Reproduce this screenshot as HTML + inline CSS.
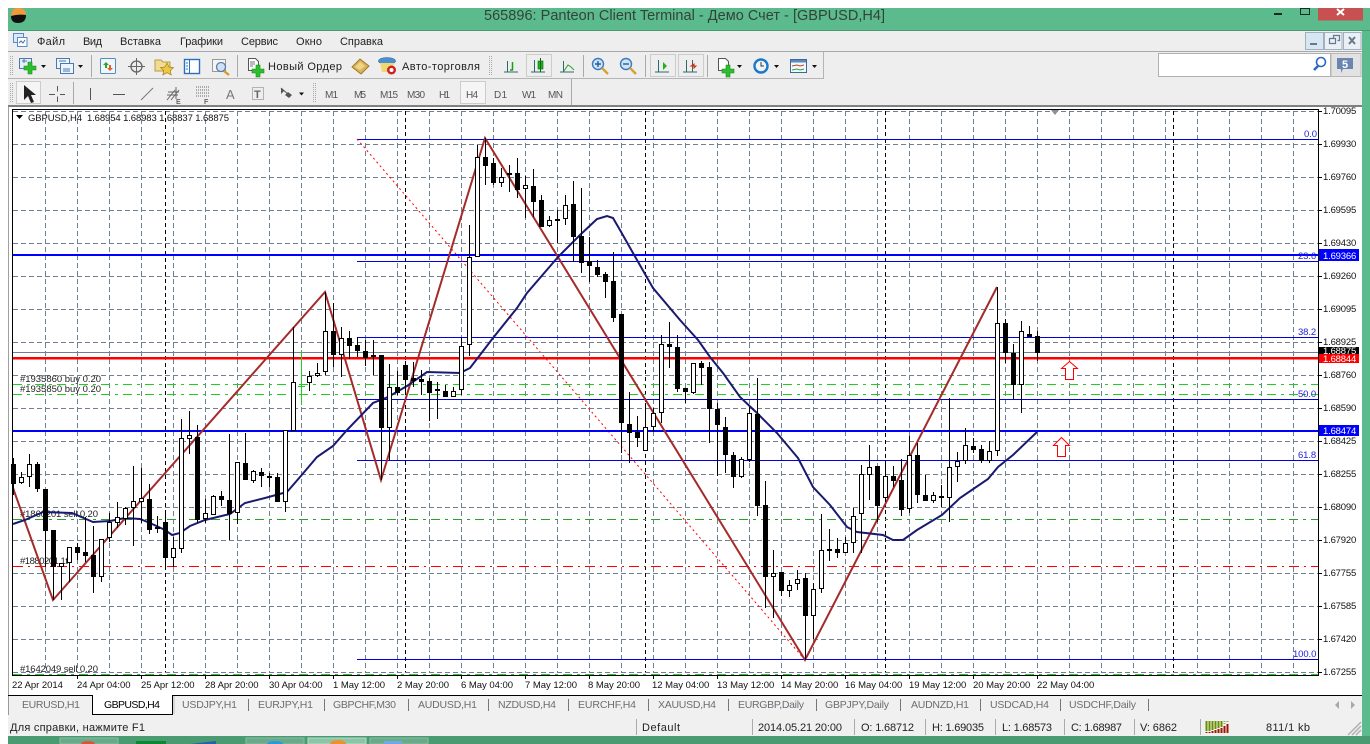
<!DOCTYPE html>
<html lang="ru"><head><meta charset="utf-8"><title>565896: Panteon Client Terminal</title>
<style>
html,body{margin:0;padding:0;background:#fff;width:1370px;height:744px;overflow:hidden}
svg{display:block}
text{font-family:"Liberation Sans",sans-serif;font-size:9.5px;fill:#000;white-space:pre}
.m{font-size:11px;fill:#222}
.tab{font-size:10.5px;fill:#6a6e72}
.st{font-size:11px;fill:#222}
.tf{font-size:10px;fill:#555}
.p{letter-spacing:-.18px;fill:#111}
.t{letter-spacing:-.03px;fill:#111}
.w{letter-spacing:-.18px;fill:#fff}
.f{fill:#2222dd;letter-spacing:-.1px}
.o{fill:#222}
</style></head><body>
<svg width="1370" height="744" viewBox="0 0 1370 744" xmlns="http://www.w3.org/2000/svg">
<!-- frame -->
<rect x="8" y="8" width="1362" height="736" fill="#5cbb8c"/>
<rect x="8" y="30" width="1362" height="1" fill="#4a9a72"/>
<rect x="8" y="31" width="1354" height="705" fill="#eeeeee"/>
<rect x="8" y="736" width="1362" height="8" fill="#4a9a72"/>
<!-- taskbar pieces -->
<rect x="60" y="738" width="58" height="6" fill="#6aa98a" stroke="#88c0a4"/>
<ellipse cx="88" cy="744" rx="7" ry="3" fill="#d8573c"/>
<rect x="136" y="741" width="30" height="3" fill="#0a8a30"/>
<path d="M190 744L216 741V744z" fill="#2a5ea8"/>
<rect x="246" y="738" width="58" height="6" fill="#6aa98a" stroke="#88c0a4"/>
<ellipse cx="275" cy="744" rx="8" ry="3" fill="#2a9ae0"/>
<rect x="308" y="738" width="58" height="6" fill="#8cc4a8" stroke="#b8dcc8"/>
<ellipse cx="338" cy="744" rx="8" ry="4" fill="#ee9030"/>
<rect x="370" y="738" width="58" height="6" fill="#6aa98a" stroke="#88c0a4"/>
<rect x="384" y="741" width="18" height="3" fill="#70a8e0"/>
<!-- logo -->
<path d="M11 16Q11 8 18 8Q26 8 26 15Q18 14 11 16z" fill="#f09a3c"/>
<path d="M11 16Q18 14 26 15Q26 23 18 23Q11 23 11 16z" fill="#111"/>
<!-- title -->
<text x="484" y="20" style="font-size:14.5px;fill:#34423c" textLength="401" lengthAdjust="spacing">565896: Panteon Client Terminal - Демо Счет - [GBPUSD,H4]</text>
<rect x="1274" y="13" width="8" height="2" fill="#1a2a22"/>
<rect x="1300.5" y="8.5" width="9" height="6" fill="none" stroke="#1a2a22"/>
<rect x="1318" y="8" width="45" height="12.5" fill="#c75050"/>
<path d="M1337 9L1344 15M1344 9L1337 15" stroke="#fff" stroke-width="2"/>
<!-- menu bar -->
<rect x="8" y="51" width="1354" height="1" fill="#a8a8a8"/>
<rect x="13.5" y="33.5" width="10" height="9" fill="#dbe8f8" stroke="#5a8ac8"/>
<rect x="17.5" y="37.5" width="9.5" height="9" fill="#fff" stroke="#5a8ac8"/>
<path d="M19 43l2-2 2 2 2-3" stroke="#3a70b0" fill="none"/>
<text class="m" x="37" y="45" textLength="28">Файл</text>
<text class="m" x="83" y="45" textLength="19">Вид</text>
<text class="m" x="120" y="45" textLength="41">Вставка</text>
<text class="m" x="180" y="45" textLength="43">Графики</text>
<text class="m" x="241" y="45" textLength="37">Сервис</text>
<text class="m" x="296" y="45" textLength="26">Окно</text>
<text class="m" x="340" y="45" textLength="43">Справка</text>
<rect x="1305.5" y="32.5" width="18" height="17" fill="#d8e6f4" stroke="#a0b0c0"/>
<rect x="1324.5" y="32.5" width="17.5" height="17" fill="#eaf0f6" stroke="#a0b0c0"/>
<rect x="1343.5" y="32.5" width="17.5" height="17" fill="#eaf0f6" stroke="#a0b0c0"/>
<rect x="1310" y="43" width="7" height="2" fill="#66788a"/>
<path d="M1333.5 38.5v-3h6v5h-2M1329.5 38.5h6v5h-6z" fill="none" stroke="#66788a" stroke-width="1.2"/>
<path d="M1349 37l6 7M1355 37l-6 7" stroke="#66788a" stroke-width="2"/>
<!-- toolbar 1 -->
<rect x="8" y="78" width="815" height="1" fill="#b4b4b4"/>
<rect x="823" y="52" width="1" height="27" fill="#b4b4b4"/>
<path d="M10.5 56V76M12.5 56V76M489.5 56V76M491.5 56V76" stroke="#aaa" stroke-dasharray="1 1"/>
<rect x="19.5" y="58.5" width="12" height="10" fill="#e4effa" stroke="#4a78b0"/>
<path d="M22 61h5M24 59v4" stroke="#4a78b0" fill="none"/>
<path d="M28 62h4v4h4v4h-4v4h-4v-4h-4v-4h4z" fill="#2ebd2e" stroke="#1a8a1a" stroke-width=".6"/>
<path d="M41 65h5l-2.500 3z" fill="#111"/>
<rect x="56.500" y="58.500" width="13" height="10" fill="#eef4fc" stroke="#4a78b0"/>
<rect x="60.500" y="63.500" width="13" height="10" fill="#eef4fc" stroke="#4a78b0"/>
<path d="M59 61h7M63 69h7M63 71h7" stroke="#4a78b0" fill="none"/>
<path d="M78 65h5l-2.500 3z" fill="#111"/>
<rect x="91" y="55" width="1" height="22" fill="#aaa"/>
<rect x="100.500" y="58.500" width="15" height="15" rx="1" fill="#f2f6fa" stroke="#4a90c0"/>
<path d="M106 62l-3 3h2v3h2v-3h2z" fill="#2aa52a"/>
<path d="M110 71l3-3h-2v-3h-2v3h-2z" fill="#e06030"/>
<circle cx="136.500" cy="66.500" r="5.500" fill="none" stroke="#666" stroke-width="1.300"/>
<path d="M136.500 58V75M128 66.500H145" stroke="#666"/>
<path d="M155 60h6l2 2h7v9h-15z" fill="#f2dc94" stroke="#b89c40"/>
<path d="M167 63l2 4 4.500.6-3.300 3 1 4.400-4.200-2.300-4.200 2.300 1-4.400-3.300-3 4.500-.6z" fill="#f0c840" stroke="#a08020" stroke-width=".7"/>
<rect x="184.500" y="59.500" width="15" height="14" fill="#fff" stroke="#2a70c0" stroke-width="1.400"/>
<path d="M189.500 60V73" stroke="#2a70c0"/><path d="M186 63h2M186 66h2M186 69h2" stroke="#2a70c0"/>
<rect x="212.500" y="59.500" width="13" height="12" fill="#f4f4f4" stroke="#999"/>
<circle cx="221" cy="67" r="4.500" fill="#cfe2f5" stroke="#5a80aa" stroke-width="1.300"/>
<path d="M224 71l5 4" stroke="#d89a30" stroke-width="2.400"/>
<rect x="237" y="55" width="1" height="22" fill="#aaa"/>
<path d="M248.500 58.500h7l3 3v9h-10z" fill="#fff" stroke="#555"/>
<path d="M250 62h5M250 64h5M250 66h3" stroke="#777"/>
<path d="M256 65h4v4h4v4h-4v4h-4v-4h-4v-4h4z" fill="#2ebd2e" stroke="#1a8a1a" stroke-width=".6"/>
<text class="m" x="268" y="70" textLength="74">Новый Ордер</text>
<path d="M352 67L360 59L369 66L361 74z" fill="#d9b45a" stroke="#9a7a28"/>
<path d="M355 67L360 62L365 66L360 70z" fill="#efd488"/>
<ellipse cx="387" cy="61" rx="8.500" ry="3.500" fill="#4a90d0" stroke="#2a6aa0" stroke-width=".6"/>
<path d="M380 63h14l-2 9h-10z" fill="#f0d870"/>
<circle cx="391.500" cy="70" r="4.500" fill="#d02020"/><circle cx="391.500" cy="70" r="2" fill="#fff"/>
<text class="m" x="402" y="70" textLength="78">Авто-торговля</text>
<!-- chart type -->
<g fill="none" stroke="#2f6a6a">
<path d="M504 72h14M507.500 61v11"/>
<path d="M531 72h14M534.500 60v12"/>
<path d="M560 72h14M563.500 61v11"/>
<path d="M655 72h14M658.500 60v12"/>
<path d="M683 72h14M686.500 60v12M692.500 60v12"/>
</g>
<rect x="526.500" y="54.500" width="25" height="22" fill="none" stroke="#ccc"/>
<rect x="650.500" y="54.500" width="25" height="22" fill="none" stroke="#ccc"/>
<rect x="678.500" y="54.500" width="25" height="22" fill="none" stroke="#ccc"/>
<path d="M512.500 62V70M510 70h3" stroke="#18a018" fill="none" stroke-width="1.500"/>
<rect x="538" y="61" width="5" height="8" fill="#22b022" stroke="#0a6a0a" stroke-width=".6"/><path d="M540.500 58v14" stroke="#0a6a0a"/>
<path d="M564 71l4-6 3 2 3 3" stroke="#30a030" fill="none"/>
<path d="M663 62l4 4-4 4z" fill="#22b022"/>
<path d="M696 66h-5l3-2v4z" fill="#d03010" stroke="#d03010"/>
<rect x="583" y="55" width="1" height="22" fill="#aaa"/>
<circle cx="598" cy="64" r="5.500" fill="#cfe4f6" stroke="#3a7ac0" stroke-width="1.400"/>
<path d="M595 64h6M598 61v6" stroke="#2a5a9a" stroke-width="1.400"/>
<path d="M602 68l6 6" stroke="#d8a030" stroke-width="2.400"/>
<circle cx="626" cy="64" r="5.500" fill="#cfe4f6" stroke="#3a7ac0" stroke-width="1.400"/>
<path d="M623 64h6" stroke="#2a5a9a" stroke-width="1.400"/>
<path d="M630 68l6 6" stroke="#d8a030" stroke-width="2.400"/>
<rect x="645" y="55" width="1" height="22" fill="#aaa"/>
<rect x="707" y="55" width="1" height="22" fill="#aaa"/>
<path d="M718.500 58.500h7l3 3v9h-10z" fill="#fff" stroke="#555"/>
<path d="M726 65h4v4h4v4h-4v4h-4v-4h-4v-4h4z" fill="#2ebd2e" stroke="#1a8a1a" stroke-width=".6"/>
<path d="M737 65h5l-2.500 3z" fill="#111"/>
<circle cx="761" cy="66" r="6.500" fill="#f0f4f8" stroke="#1a78c8" stroke-width="2.400"/>
<path d="M761 62v4h3" stroke="#333" fill="none"/>
<path d="M774 65h5l-2.500 3z" fill="#111"/>
<rect x="790.500" y="59.500" width="16" height="13" fill="#f2f8ff" stroke="#3a6a9a"/>
<rect x="791" y="60" width="15" height="2.500" fill="#5a8ac0"/>
<path d="M792 66l5-1 3 1 4-1" stroke="#c84020" fill="none"/>
<path d="M792 70l5-1 3 1 4-1" stroke="#30a030" fill="none"/>
<path d="M812 65h5l-2.500 3z" fill="#111"/>
<!-- search -->
<rect x="1158.500" y="53.500" width="172" height="23" fill="#fff" stroke="#b0b0b0"/>
<circle cx="1321" cy="62" r="4.500" fill="none" stroke="#2a68c0" stroke-width="1.600"/>
<path d="M1318 66l-4 4" stroke="#2a68c0" stroke-width="2.500"/>
<rect x="1331" y="53.500" width="30" height="23" fill="#e2e2e2" stroke="#b8b8b8"/>
<path d="M1337 58h16v11h-10l-2 4v-4h-4z" fill="#6a85b0"/>
<text x="1342" y="68" style="font-size:11px;font-weight:bold;fill:#fff">5</text>
<!-- toolbar 2 -->
<path d="M10.500 83V103M12.500 83V103M313.500 83V103M315.500 83V103" stroke="#aaa" stroke-dasharray="1 1"/>
<rect x="16.500" y="81.500" width="24" height="22" fill="#f5f5f5" stroke="#ccc"/>
<path d="M24 85v15l4-4 3 7 3-1-3-7h5z" fill="#222"/>
<path d="M57.500 86V91.500M57.500 96.500V102M49 94.500H55M60 94.500H65" stroke="#555"/>
<rect x="73" y="82" width="1" height="22" fill="#aaa"/>
<path d="M90.500 88V100M113 94.500H125" stroke="#555"/>
<path d="M141 100L153 88" stroke="#777"/>
<path d="M167 100l8-10M171 100l8-10M167 95h11M168 92h11M176 87v12" stroke="#666" fill="none"/>
<text x="176" y="104" style="font-size:7px;font-weight:bold;fill:#666">E</text>
<path d="M196 87h13M196 90h13M196 93h13M196 96h13" stroke="#666" stroke-dasharray="1 1"/>
<text x="204" y="104" style="font-size:7px;font-weight:bold;fill:#666">F</text>
<text x="226" y="99" style="font-size:13px;fill:#777">A</text>
<rect x="252.500" y="87.500" width="11" height="12" fill="none" stroke="#777" stroke-dasharray="1 1"/>
<text x="254" y="98" style="font-size:11px;font-weight:bold;fill:#666">T</text>
<path d="M281 88l3 3-3 3zM288 92l4 3-3 3-4-3z" fill="#555"/><path d="M281 88l8 7" stroke="#555"/>
<path d="M299 92.500h5l-2.500 3z" fill="#111"/>
<text class="tf" x="325" y="98" textLength="13">M1</text>
<text class="tf" x="354" y="98" textLength="12">M5</text>
<text class="tf" x="380" y="98" textLength="18">M15</text>
<text class="tf" x="407" y="98" textLength="18">M30</text>
<text class="tf" x="439" y="98" textLength="11">H1</text>
<rect x="460.500" y="81.500" width="25" height="22" fill="#f5f5f5" stroke="#ccc"/>
<text class="tf" x="466" y="98" textLength="12">H4</text>
<text class="tf" x="494" y="98" textLength="13">D1</text>
<text class="tf" x="522" y="98" textLength="14">W1</text>
<text class="tf" x="548" y="98" textLength="15">MN</text>
<rect x="571" y="79" width="1" height="26" fill="#aaa"/>
<!-- chart window -->
<rect x="8" y="105" width="1354" height="590" fill="#fff"/>
<rect x="8" y="105" width="1354" height="2" fill="#808080"/>
<rect x="8" y="107" width="1" height="588" fill="#a0a0a0"/>
<!-- grid -->
<g fill="none" stroke="#708090" stroke-dasharray="5 3">
<path d="M13 111.500H1318M13 144.500H1318M13 177.500H1318M13 210.500H1318M13 243.500H1318M13 276.500H1318M13 309.500H1318M13 342.500H1318M13 375.500H1318M13 408.500H1318M13 441.500H1318M13 474.500H1318M13 507.500H1318M13 540.500H1318M13 573.500H1318M13 606.500H1318M13 639.500H1318M13 672.500H1318"/>
<path d="M45.500 111V672M77.500 111V672M109.500 111V672M141.500 111V672M173.500 111V672M205.500 111V672M237.500 111V672M269.500 111V672M301.500 111V672M333.500 111V672M365.500 111V672M397.500 111V672M429.500 111V672M461.500 111V672M493.500 111V672M525.500 111V672M557.500 111V672M589.500 111V672M621.500 111V672M653.500 111V672M685.500 111V672M717.500 111V672M749.500 111V672M781.500 111V672M813.500 111V672M845.500 111V672M877.500 111V672M909.500 111V672M941.500 111V672M973.500 111V672M1005.500 111V672M1037.500 111V672M1069.500 111V672M1101.500 111V672M1133.500 111V672M1165.500 111V672M1197.500 111V672M1229.500 111V672M1261.500 111V672M1293.500 111V672"/>
</g>
<path d="M165.500 111V672M405.500 111V672M645.500 111V672M885.500 111V672M1173.500 111V672" stroke="#000" stroke-dasharray="4 3" fill="none"/>
<path d="M13 674.500H1318" stroke="#22cc22" stroke-dasharray="9 5 3 5" fill="none"/>
<!-- objects -->
<path d="M357 139.500H1318M357 261.500H1318M357 337.500H1318M357 399.500H1318M357 460.500H1318M357 659.500H1318" stroke="#0000e0" fill="none"/>
<path d="M357 139L805 660" stroke="#f00" stroke-dasharray="2 3" fill="none"/>
<rect x="13" y="352" width="1305" height="1" fill="#708090"/>
<rect x="13" y="254" width="1305" height="2" fill="#0000ff"/>
<rect x="13" y="430" width="1305" height="2" fill="#0000ff"/>
<rect x="13" y="357" width="1305" height="2.500" fill="#ff0000"/>
<path d="M13 384.500H1318M13 394.500H1318" stroke="#22cc22" stroke-dasharray="9 5 3 5" fill="none"/>
<path d="M13 519.500H1318" stroke="#2ca02c" stroke-dasharray="9 5 3 5" fill="none"/>
<path d="M13 566.500H1318" stroke="#ff0000" stroke-dasharray="10 5 2 5" fill="none"/>
<!-- labels -->
<text class="o" x="20" y="382" textLength="81">#1935860 buy 0.20</text>
<text class="o" x="20" y="392" textLength="81">#1935850 buy 0.20</text>
<text class="o" x="20" y="517" textLength="78">#1860201 sell 0.20</text>
<text class="o" x="20" y="564" textLength="48">#1880201 1t</text>
<text class="o" x="20" y="672" textLength="78">#1642049 sell 0.20</text>
<text class="f" x="1304" y="137">0.0</text>
<text class="f" x="1298" y="259">23.6</text>
<text class="f" x="1298" y="335">38.2</text>
<text class="f" x="1298" y="397">50.0</text>
<text class="f" x="1298" y="458">61.8</text>
<text class="f" x="1293" y="657">100.0</text>
<!-- indicators -->
<polyline fill="none" stroke="#a52a2a" stroke-width="2" points="13,488 53,600 325,292 381,480 485,138 805,660 997,287"/>
<polyline fill="none" stroke="#191970" stroke-width="2" points="13,524 25,520 43,512 72,513 93,522 110,521 125,518 140,519 150,523 165,530 172,535 180,533 190,526 205,520 230,514 245,503 265,498 287,492 300,477 317,457 333,446 347,430 373,403 388,397 407,386 427,372 460,373 470,368 480,355 493,338 517,308 527,293 558,257 580,235 597,219 607,216 613,218 620,230 633,253 653,288 680,320 698,340 710,357 723,373 740,397 757,413 777,433 798,458 813,487 830,505 847,527 857,532 883,535 893,540 903,540 917,530 942,515 960,498 988,479 998,467 1013,455 1037,432"/>
<!-- green tick -->
<path d="M301.500 350V405M298 386.500H305" stroke="#22cc22" fill="none"/>
<!-- wicks -->
<path stroke="#000" fill="none" d="M13.500 458V495M21.500 472V484M29.500 454V487M37.500 462V492M45.500 489V567M53.500 530V600M61.500 563V600M69.500 547V582M77.500 543V560M85.500 517V562M93.500 526V593M101.500 539V582M109.500 513V542M117.500 502V528M125.500 507V525M133.500 466V546M141.500 468V523M149.500 484V534M157.500 516V533M165.500 511V570M173.500 537V567M181.500 419V553M189.500 411V454M197.500 425V523M205.500 499V523M213.500 495V515M221.500 491V506M229.500 434V540M237.500 462V524M245.500 433V480M253.500 470V483M261.500 468V487M269.500 473V487M277.500 473V502M285.500 430V512M293.500 327V431M309.500 371V391M317.500 363V377M325.500 292V375M333.500 303V367M341.500 327V377M349.500 331V359M357.500 337V357M365.500 340V366M373.500 340V375M381.500 355V480M389.500 364V460M397.500 371V395M405.500 361V395M413.500 362V387M421.500 370V395M429.500 378V421M437.500 382V419M445.500 385V397M453.500 387V397M461.500 338V395M469.500 225V356M477.500 145V257M485.500 138V185M493.500 158V185M501.500 168V187M509.500 165V192M517.500 158V198M525.500 176V218M533.500 169V217M541.500 195V227M549.500 216V227M557.500 210V243M565.500 195V225M573.500 181V262M581.500 188V273M589.500 237V282M597.500 260V277M605.500 272V298M613.500 252V322M621.500 314V453M629.500 392V463M637.500 416V447M645.500 403V451M653.500 408V432M661.500 335V423M669.500 322V368M677.500 335V392M685.500 388V403M693.500 363V394M701.500 361V385M709.500 362V443M717.500 403V476M725.500 417V473M733.500 452V488M741.500 457V478M749.500 407V462M757.500 378V516M765.500 481V608M773.500 550V618M781.500 572V596M789.500 580V597M797.500 570V590M805.500 573V660M813.500 583V639M821.500 514V593M829.500 529V561M837.500 538V558M845.500 537V553M853.500 508V553M861.500 465V553M869.500 445V500M877.500 466V522M885.500 463V502M893.500 466V487M901.500 459V516M909.500 436V513M917.500 443V503M925.500 475V501M933.500 492V503M941.500 485V507M949.500 398V522M957.500 452V482M965.500 428V464M973.500 438V453M981.500 445V463M989.500 441V463M997.500 287V456M1005.500 319V363M1013.500 344V399M1021.500 321V413M1029.500 326V337M1037.500 331V361"/>
<!-- black bodies -->
<path fill="#000" d="M11 464h5v20h-5zM35 464h5v25h-5zM43 489h5v42h-5zM51 530h5v37h-5zM75 547h5v6h-5zM83 552h5v4h-5zM91 555h5v22h-5zM147 499h5v31h-5zM163 522h5v36h-5zM195 437h5v83h-5zM219 496h5v4h-5zM227 500h5v14h-5zM243 463h5v17h-5zM259 472h5v4h-5zM267 476h5v2h-5zM275 477h5v25h-5zM331 331h5v24h-5zM347 338h5v8h-5zM355 345h5v6h-5zM363 351h5v7h-5zM371 355h5v2h-5zM379 355h5v73h-5zM395 387h5v6h-5zM403 365h5v15h-5zM411 378h5v3h-5zM419 379h5v3h-5zM427 381h5v12h-5zM443 391h5v6h-5zM483 157h5v9h-5zM491 163h5v20h-5zM515 173h5v17h-5zM531 186h5v16h-5zM539 200h5v27h-5zM555 219h5v2h-5zM571 204h5v33h-5zM579 236h5v27h-5zM587 261h5v5h-5zM595 267h5v8h-5zM603 274h5v8h-5zM611 281h5v37h-5zM619 314h5v109h-5zM627 424h5v9h-5zM635 432h5v6h-5zM667 344h5v3h-5zM675 347h5v42h-5zM683 388h5v4h-5zM699 363h5v5h-5zM707 367h5v42h-5zM715 409h5v16h-5zM723 427h5v28h-5zM731 455h5v22h-5zM755 414h5v92h-5zM763 505h5v72h-5zM779 572h5v19h-5zM803 578h5v38h-5zM827 549h5v2h-5zM835 549h5v4h-5zM875 466h5v40h-5zM891 476h5v5h-5zM899 480h5v30h-5zM915 455h5v40h-5zM923 495h5v6h-5zM939 496h5v2h-5zM971 446h5v4h-5zM979 449h5v12h-5zM1003 323h5v30h-5zM1011 353h5v32h-5zM1027 334h5v3h-5zM1035 336h5v17h-5z"/>
<!-- white bodies -->
<path fill="#fff" stroke="#000" d="M19.500 477.500h4v5h-4zM27.500 464.500h4v12h-4zM59.500 563.500h4v3h-4zM67.500 547.500h4v15h-4zM99.500 539.500h4v37h-4zM107.500 522.500h4v15h-4zM115.500 517.500h4v5h-4zM123.500 508.500h4v10h-4zM131.500 501.500h4v6h-4zM139.500 498.500h4v3h-4zM155.500 527.500h4v1h-4zM171.500 548.500h4v9h-4zM179.500 438.500h4v110h-4zM187.500 435.500h4v3h-4zM203.500 513.500h4v5h-4zM211.500 496.500h4v18h-4zM235.500 462.500h4v50h-4zM251.500 471.500h4v9h-4zM283.500 430.500h4v71h-4zM291.500 382.500h4v48h-4zM307.500 376.500h4v6h-4zM315.500 373.500h4v2h-4zM323.500 331.500h4v40h-4zM339.500 338.500h4v16h-4zM387.500 387.500h4v40h-4zM435.500 389.500h4v1h-4zM451.500 391.500h4v5h-4zM459.500 346.500h4v43h-4zM467.500 257.500h4v87h-4zM475.500 157.500h4v99h-4zM499.500 177.500h4v5h-4zM507.500 173.500h4v1h-4zM523.500 185.500h4v3h-4zM547.500 220.500h4v5h-4zM563.500 205.500h4v13h-4zM643.500 427.500h4v23h-4zM651.500 413.500h4v13h-4zM659.500 344.500h4v68h-4zM691.500 363.500h4v29h-4zM739.500 459.500h4v17h-4zM747.500 413.500h4v46h-4zM771.500 573.500h4v3h-4zM787.500 585.500h4v5h-4zM795.500 579.500h4v4h-4zM811.500 589.500h4v26h-4zM819.500 550.500h4v38h-4zM843.500 543.500h4v9h-4zM851.500 516.500h4v26h-4zM859.500 474.500h4v39h-4zM867.500 467.500h4v7h-4zM883.500 476.500h4v21h-4zM907.500 455.500h4v53h-4zM931.500 495.500h4v5h-4zM947.500 467.500h4v30h-4zM955.500 461.500h4v5h-4zM963.500 445.500h4v15h-4zM987.500 451.500h4v9h-4zM995.500 323.500h4v127h-4zM1019.500 331.500h4v53h-4z"/>
<!-- arrows -->
<path d="M1069.500 361.500L1077.500 368.500H1073.500V379.500H1065.500V368.500H1061.500z" fill="#fff" stroke="#f00"/>
<path d="M1061.500 437.500L1069.500 445.500H1065.500V456.500H1057.500V445.500H1053.500z" fill="#fff" stroke="#f00"/>
<path d="M1051 110h8l-4 5z" fill="#8a8f98"/>
<!-- header -->
<path d="M16 115h7l-3.500 4z" fill="#000"/>
<text x="28" y="121" textLength="201" style="fill:#111">GBPUSD,H4  1.68954 1.68983 1.68837 1.68875</text>
<!-- borders -->
<path d="M12.500 109V675.500H1318.500V109.500H12.500" fill="none" stroke="#000"/>
<!-- price axis -->
<path stroke="#000" fill="none" d="M1318 111.500h4M1318 144.500h4M1318 177.500h4M1318 210.500h4M1318 243.500h4M1318 276.500h4M1318 309.500h4M1318 342.500h4M1318 375.500h4M1318 408.500h4M1318 441.500h4M1318 474.500h4M1318 507.500h4M1318 540.500h4M1318 573.500h4M1318 606.500h4M1318 639.500h4M1318 672.500h4"/>
<text class="p" x="1323" y="114">1.70095</text>
<text class="p" x="1323" y="147">1.69930</text>
<text class="p" x="1323" y="180">1.69760</text>
<text class="p" x="1323" y="213">1.69595</text>
<text class="p" x="1323" y="246">1.69430</text>
<text class="p" x="1323" y="279">1.69260</text>
<text class="p" x="1323" y="312">1.69095</text>
<text class="p" x="1323" y="345">1.68925</text>
<text class="p" x="1323" y="378">1.68760</text>
<text class="p" x="1323" y="411">1.68590</text>
<text class="p" x="1323" y="444">1.68425</text>
<text class="p" x="1323" y="477">1.68255</text>
<text class="p" x="1323" y="510">1.68090</text>
<text class="p" x="1323" y="543">1.67920</text>
<text class="p" x="1323" y="576">1.67755</text>
<text class="p" x="1323" y="609">1.67585</text>
<text class="p" x="1323" y="642">1.67420</text>
<text class="p" x="1323" y="675">1.67255</text>
<rect x="1319" y="249" width="40" height="12" fill="#0000ff"/><text class="w" x="1323" y="259">1.69366</text>
<rect x="1319" y="347" width="40" height="7" fill="#000"/><text class="w" x="1323" y="354">1.68875</text>
<rect x="1319" y="354" width="40" height="9" fill="#ff0000"/><text class="w" x="1323" y="362">1.68844</text>
<rect x="1319" y="425" width="40" height="11" fill="#0000ff"/><text class="w" x="1323" y="434">1.68474</text>
<!-- time axis -->
<path stroke="#000" fill="none" d="M77.500 675V679M141.500 675V679M205.500 675V679M269.500 675V679M333.500 675V679M397.500 675V679M461.500 675V679M525.500 675V679M589.500 675V679M653.500 675V679M717.500 675V679M781.500 675V679M845.500 675V679M909.500 675V679M973.500 675V679M1037.500 675V679"/>
<text class="t" x="12" y="688">22 Apr 2014</text>
<text class="t" x="77" y="688">24 Apr 04:00</text>
<text class="t" x="141" y="688">25 Apr 12:00</text>
<text class="t" x="205" y="688">28 Apr 20:00</text>
<text class="t" x="269" y="688">30 Apr 04:00</text>
<text class="t" x="333" y="688">1 May 12:00</text>
<text class="t" x="397" y="688">2 May 20:00</text>
<text class="t" x="461" y="688">6 May 04:00</text>
<text class="t" x="525" y="688">7 May 12:00</text>
<text class="t" x="588" y="688">8 May 20:00</text>
<text class="t" x="652" y="688">12 May 04:00</text>
<text class="t" x="717" y="688">13 May 12:00</text>
<text class="t" x="781" y="688">14 May 20:00</text>
<text class="t" x="845" y="688">16 May 04:00</text>
<text class="t" x="909" y="688">19 May 12:00</text>
<text class="t" x="973" y="688">20 May 20:00</text>
<text class="t" x="1037" y="688">22 May 04:00</text>
<!-- tabs -->
<rect x="8" y="695" width="1354" height="20" fill="#f0f0f0"/>
<rect x="8" y="695" width="1354" height="1" fill="#000"/>
<rect x="8" y="696" width="1" height="19" fill="#999"/>
<path d="M92.500 695V714.500H172.500V695" fill="#fff" stroke="#000"/>
<rect x="173" y="696" width="2" height="18" fill="#d8d8d8"/>
<text class="tab" x="22" y="708" textLength="58">EURUSD,H1</text>
<text class="tab" x="104" y="708" textLength="56" style="fill:#000">GBPUSD,H4</text>
<text class="tab" x="182" y="708" textLength="55">USDJPY,H1</text>
<text class="tab" x="258" y="708" textLength="55">EURJPY,H1</text>
<text class="tab" x="333" y="708" textLength="63">GBPCHF,M30</text>
<text class="tab" x="418" y="708" textLength="59">AUDUSD,H1</text>
<text class="tab" x="498" y="708" textLength="58">NZDUSD,H4</text>
<text class="tab" x="578" y="708" textLength="58">EURCHF,H4</text>
<text class="tab" x="658" y="708" textLength="58">XAUUSD,H4</text>
<text class="tab" x="738" y="708" textLength="66">EURGBP,Daily</text>
<text class="tab" x="825" y="708" textLength="64">GBPJPY,Daily</text>
<text class="tab" x="911" y="708" textLength="58">AUDNZD,H1</text>
<text class="tab" x="990" y="708" textLength="59">USDCAD,H4</text>
<text class="tab" x="1069" y="708" textLength="67">USDCHF,Daily</text>
<path d="M248.500 699V711M324.500 699V711M408.500 699V711M488.500 699V711M568.500 699V711M648.500 699V711M728.500 699V711M816.500 699V711M900.500 699V711M980.500 699V711M1060.500 699V711M1148.500 699V711" stroke="#777" fill="none"/>
<path d="M1339 701v8l-4-4zM1351 701v8l4-4z" fill="#a8a8a8"/>
<!-- status bar -->
<rect x="8" y="715" width="1354" height="21" fill="#f0f0f0"/>
<path d="M636.500 719V735M752.500 719V735M854.500 719V735M925.500 719V735M995.500 719V735M1064.500 719V735M1134.500 719V735M1200.500 719V735" stroke="#aaa" fill="none"/>
<text class="st" x="10" y="731" textLength="135">Для справки, нажмите F1</text>
<text class="st" x="642" y="731" textLength="38">Default</text>
<text class="st" x="758" y="731" textLength="84">2014.05.21 20:00</text>
<text class="st" x="861" y="731" textLength="53">O: 1.68712</text>
<text class="st" x="932" y="731" textLength="52">H: 1.69035</text>
<text class="st" x="1002" y="731" textLength="50">L: 1.68573</text>
<text class="st" x="1071" y="731" textLength="51">C: 1.68987</text>
<text class="st" x="1140" y="731" textLength="37">V: 6862</text>
<text class="st" x="1266" y="731" textLength="44">811/1 kb</text>
<path d="M1206.500 721V731M1209.500 721V731M1212.500 721V730M1215.500 721V729M1218.500 721V728M1221.500 721V727" stroke="#6b8e00" stroke-width="2" fill="none"/>
<path d="M1224.500 721V725M1227.500 721V723" stroke="#9aa860" stroke-width="2" fill="none" stroke-dasharray="1 1"/>
<path d="M1206.500 732V733M1209.500 732V733M1212.500 731V733M1215.500 730V733M1218.500 729V733M1221.500 728V733M1224.500 726V733M1227.500 724V733" stroke="#a01800" stroke-width="2" fill="none"/>
<path d="M1348 735L1361 722M1352 735L1361 726M1356 735L1361 730" stroke="#b0b0b0" stroke-width="1.500" fill="none"/>
</svg>
</body></html>
